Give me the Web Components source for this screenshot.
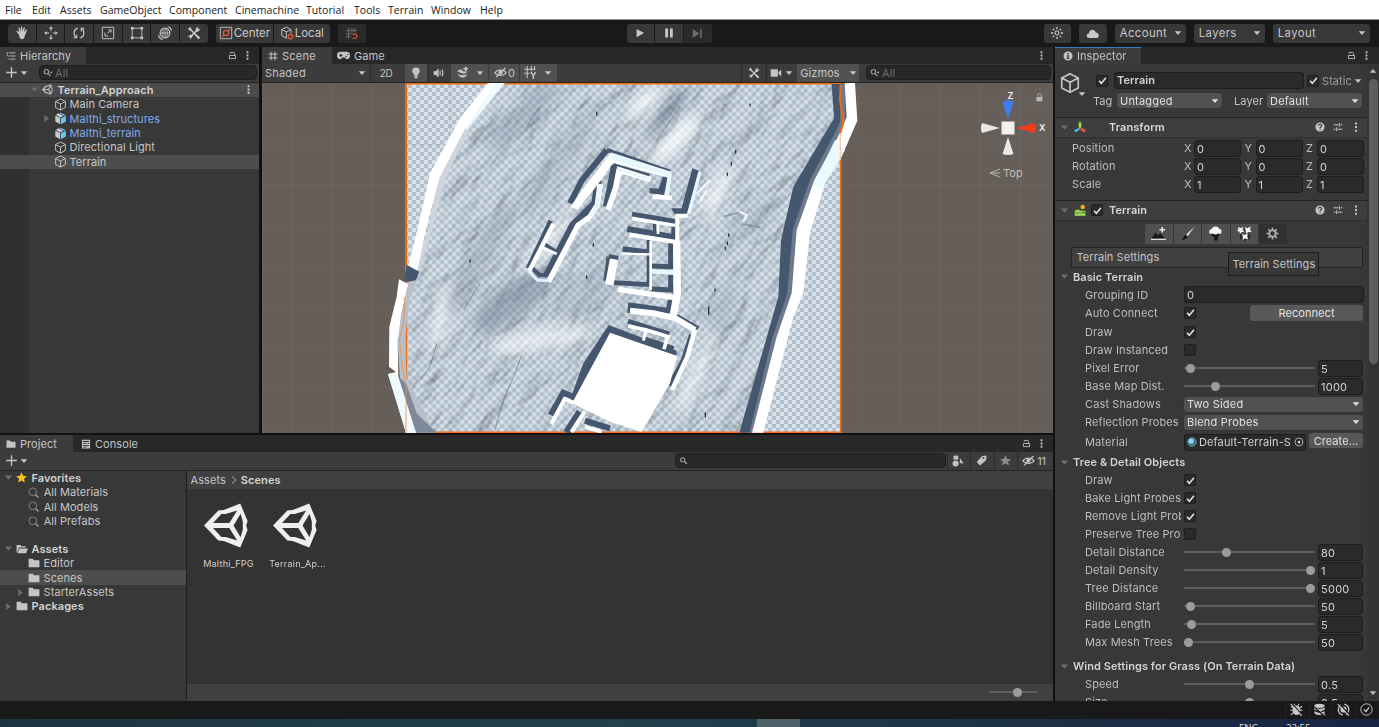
<!DOCTYPE html>
<html lang="en">
<head>
<meta charset="utf-8">
<title>Terrain_Approach</title>
<style>
html,body{margin:0;padding:0;background:#191919;overflow:hidden}
body{font-family:Inter,"Liberation Sans",sans-serif;font-size:11px;color:#c4c4c4;letter-spacing:.07px;line-height:14px}
</style>
</head>
<body>
<ue-editor></ue-editor>
<script>
const define = (name, css, html) => customElements.define(name, class extends HTMLElement {
  connectedCallback() {
    if (this.shadowRoot) return;
    const t = document.createElement('template');
    t.innerHTML = '<style>*{box-sizing:border-box}' + css + '</style>' + (typeof html === 'function' ? html(this) : html);
    this.attachShadow({ mode: 'open' }).append(t.content.cloneNode(true));
  }
});
const attr = (el, n, d = '') => el.getAttribute(n) ?? d;

/* Icons, drawn on a 16 x 16 grid in the current colour. */
const S = (d, w = 1.2) => `<path d="${d}" fill="none" stroke="currentColor" stroke-width="${w}"/>`;
const F = (d, c = 'currentColor') => `<path d="${d}" fill="${c}"/>`;
const cube = S('M8 1.2 14 4.3V11.7L8 14.8 2 11.7V4.3ZM2 4.3 8 7.5 14 4.3M8 7.5V14.8', 1.2);
const eye = S('M1 8.5C4 4 12 4 15 8.5 12 12.5 4 12.5 1 8.5Z', 1.4) + '<circle cx="8" cy="8" r="2.6" fill="currentColor"/>' + S('M2.5 14 14 2.5', 1.5);
const ICONS = {
  hand: F('M4.2 9.5 2 6.8C1.3 5.8 2.4 5 3.2 5.7L5 7.5 4 2.8C3.8 1.6 5.1 1.4 5.4 2.5L6.5 6.4 6.7 1.5C6.7.4 8.2.4 8.3 1.5L8.5 6.3 9.8 2.1C10.1 1 11.4 1.4 11.2 2.5L10.4 7 12.3 4.3C12.9 3.4 14.1 4 13.6 5L11.4 10.5C11 13.5 10 15 8 15 6 15 5.2 13.5 4.2 9.5Z'),
  move: S('M8 1.5V6M8 10V14.5M1.5 8H6M10 8H14.5', 1.1) + F('M8 .2 10.3 3H5.7ZM8 15.8 5.7 13H10.3ZM.2 8 3 5.7V10.3ZM15.8 8 13 10.3V5.7Z'),
  rotate: S('M6.5 2.4C1.5 4 1 10 5 13.4M9.5 13.6C14.5 12 15 6 11 2.6', 1.3) + S('M1.8 13.4H5.5V9.8M14.2 2.6H10.5V6.2', 1.2),
  scale: S('M1.5 1.5H14.5V14.5H1.5ZM8.5 4.5H11.5V7.5M11.5 4.5 7.5 8.5M4.5 7.5V11.5H8.5', 1.1),
  rect: S('M3 2.5H13M3 13.5H13M2.5 3V13M13.5 3V13', 1) + F('M1 1H4V4H1ZM12 1H15V4H12ZM1 12H4V15H1ZM12 12H15V15H12Z'),
  multi: '<circle cx="8" cy="8" r="5.600" fill="none" stroke="currentColor" stroke-width="1.3"/>' + S('M8 2.500V13.500M2.500 8H13.500M6 3.500Q4.5 8 6 12.500M10 3.500Q11.5 8 10 12.500', 1) + S('M11 .8Q15 1.5 15.4 5.5M.6 10.5Q1.3 14.8 5.4 15.3', 1.3),
  tools: S('M3.4 12.9 12.8 3.6', 1.9) + S('M4 4 12 12', 1.6) + F('M.8 3.8 3.8 .8 6 5.5 5.2 6ZM10.3 9.3 15.2 13.2 13 15.400 9.2 10.5ZM9.6 3.2 13 .6 12.4 3.4 15.4 3.2 12.8 6.500 10.3 6ZM.8 12.300 4 9.600 6.300 12 3.6 15.3 3.600 12.600Z'),
  pivot: S('M1.5 1.5H14.5V14.5H1.5Z', 1) + '<circle cx="8" cy="8" r="3" fill="none" stroke="#d8593b" stroke-width="1.6"/><path d="M10 6 12.8 3.2M6 10 3.5 12.5" stroke="#d8593b" stroke-width="1.4"/>',
  local: S('M12.5 8V4L7.2 1.3 2 4V11L7.2 14M2 4 7.2 6.7 12.5 4M7.2 6.7V14', 1.1) + '<circle cx="12" cy="12" r="2.6" fill="none" stroke="#d8593b" stroke-width="1.5"/>',
  snap: S('M4.5 1V14M8.5 1V7M12 1V7M1 4.5H15M1 8.5H8M1 12H7', 1.1) + '<path d="M9 9H12.5Q14.5 9 14.5 11.5T12.5 14H9" fill="none" stroke="#c24d35" stroke-width="1.8"/>',
  play: F('M3.5 2.5 13.5 8 3.5 13.5Z'),
  pause: F('M3 2H6.7V14H3ZM9.3 2H13V14H9.3Z'),
  step: F('M2 2.5 10.5 8 2 13.5ZM11.2 2.5H13.2V13.5H11.2Z'),
  sun: '<circle cx="8" cy="8" r="2.6" fill="none" stroke="currentColor" stroke-width="1.4"/>' + F('M7.1 0H8.9V3H7.1ZM7.1 13H8.9V16H7.1ZM0 7.1H3V8.9H0ZM13 7.1H16V8.9H13ZM2 3.2 3.2 2 4.9 3.7 3.7 4.9ZM12.8 2 14 3.2 12.3 4.9 11.1 3.7ZM2 12.8 3.7 11.1 4.9 12.3 3.2 14ZM12.3 11.1 14 12.8 12.8 14 11.1 12.3Z'),
  cloud: F('M4 13.5C-.5 13.5 0 8.3 3.5 8 3.7 2.5 10.7 1.5 12 6.8 17 7 16.8 13.5 13 13.5Z'),
  down: F('M1.5 4.500H14.500L8 12Z'),
  right: F('M4 1.500 12 8 4 14.500Z'),
  hier: S('M1 3H3.5M5 3H15M4 8H6M7 8H15M4 13H6M7 13H15', 1.5) + S('M2 3V8H4', 1),
  lock: S('M2.5 8H13.5V13.5H2.5Z', 1.6) + S('M4 4.500V2.500H9.500Q11.500 2.500 11.500 4.500V8', 1.6),
  lockf: F('M2.5 7H13.5V15H2.5Z') + S('M5 5V3Q5 1.6 6.5 1.6H9.5Q11.5 1.6 11.5 4V7.5', 1.6),
  dots: F('M6.4 .6H9.6V3.8H6.4ZM6.4 6.4H9.6V9.6H6.4ZM6.4 12.2H9.6V15.4H6.4Z'),
  plus: S('M8 1.5V14.5M1.5 8H14.5', 1.7),
  find: '<circle cx="5.5" cy="6" r="3.5" fill="none" stroke="currentColor" stroke-width="1.7"/>' + S('M8 8.5 12 13', 2) + F('M10.5 6H15.5L13 9Z'),
  find2: '<circle cx="6" cy="6" r="3.300" fill="none" stroke="currentColor" stroke-width="1.7"/>' + S('M8.5 8.5 12.5 12.8', 2.2),
  glass: '<circle cx="7" cy="7" r="5.6" fill="none" stroke="currentColor" stroke-width="1.1"/>' + S('M10.8 10.8 15.2 15.2', 1.9),
  unity: '<path fill="currentColor" fill-rule="evenodd" d="M0 8 5.1 2.700 7 2.500 12.9.2 15.5 6.4 15 8 15.5 9.6 12.9 15.8 7 13.500 5.1 13.3ZM3.2 7.1H9L11.8 2.700 7.700 3.900 6.200 3.900ZM3.2 8.9 6.200 12.1 7.700 12.100 11.8 13.3 9 8.9ZM10.5 8 13 12.2 13.8 9.4V6.6L13 3.8Z"/>',
  cube,
  prefab: F('M1.6 4.2 7.6 7.5V15L1.6 11.8Z', '#c3c9cd') + F('M8.6 7.6 14.6 4.6V11.8L8.600 15Z', '#62cbfb') + F('M2.2 3.5 5.7 1.6 11.4 4.8 8 6.8Z', '#c9cfd3') + F('M6.8 1.3 8 .8 14.200 3.7 12.3 4.7Z', '#7fd6ff'),
  grid: S('M5 1V15M11 1V15M1 5H15M1 11H15', 1.6),
  pad: '<path fill="currentColor" fill-rule="evenodd" d="M4 3.5H12Q16 4 16 8T12.5 12.5Q10.5 12.5 9.5 10.5H6.5Q5.5 12.5 3.5 12.5 0 12 0 8T4 3.5ZM4 6V7H3V8.6H4V9.8H5.4V8.6H6.6V7H5.4V6ZM10.5 8.5H12V10H10.5ZM12.5 6H14V7.5H12.5Z"/>',
  bulb: F('M8 .8C1.8.8 2 6.5 5 9.2L5.6 11.5H10.4L11 9.2C14 6.5 14.2.8 8 .8ZM5.8 12.3H10.2V14Q8 16.5 5.8 14Z'),
  audio: F('M.8 5.5H3.5L7.5 2V14L3.5 10.5H.8Z') + S('M9.5 5V11M12 3.5Q14.5 8 12 12.5', 1.5),
  fx: F('M1 6 6 4 9 6.5 14.5 7 10 9.5 6.5 9ZM1 9.5 6 11.5 14.5 10.5 10 14 6 14Z') + F('M11 .8H13V6H11ZM9.2 2.5H14.8V4.4H9.2Z'),
  eye,
  gridy: S('M4 0V15M9 0V6M0 4H14M0 9H7M13 0V5', 1.3) + S('M8.5 7.5 11.5 11.5 14.5 7.5M11.5 11.5V16', 1.9),
  cam: F('M1 3H10.5V13H1ZM11.3 7 15 3.5V12.5L11.3 9Z'),
  info: '<path fill="currentColor" fill-rule="evenodd" d="M8 .8A7.2 7.2 0 1 0 8 15.2 7.2 7.2 0 0 0 8 .8ZM6.8 3.2H9.2V5.4H6.8ZM6 6.6H9.3V11.4H10.4V12.8H5.8V11.4H6.8V8H6Z"/>',
  help: '<circle cx="8" cy="8" r="7.3" fill="currentColor"/><path d="M5.3 6Q5.4 3.6 8 3.6T10.6 6Q10.6 7.4 8.3 8.4V10M8.3 11V12.8" fill="none" stroke="#3b3b3b" stroke-width="1.8"/>',
  preset: S('M1 4.5H8.5M12 4.5H15M10.2 1.5V7.5M1 11.5H4M7.5 11.5H15M5.8 8.5V14.5', 1.6),
  check: S('M3 8.5 6.3 12 13 4', 2.2),
  gizmo: F('M6.2 2.5 8 .5 9.8 2.5V9H6.2Z', '#9ee03c') + F('M6.8 9 8 11 3.2 14.8.6 14.4.8 12Z', '#5ab9ea') + F('M9.5 8.6 15.4 12 15.2 14.4 12.6 14.6 8.2 11.2Z', '#ee5b36'),
  terrain: '<circle cx="11.6" cy="4" r="3" fill="#f7a823"/>' + F('M.8 9Q5 6 8.5 8.3T15.2 8.6V11.4L.8 12Z', '#8fd43c') + F('M.8 12.8 15.2 12.2V15.5H.8Z', '#a6e65a') + S('M5 15 12 8', .8),
  raise: F('M0 13.8 5 7.2 7.5 10 10 7.8 15.5 13.8Z', '#161616') + S('M0 14.2H16', 1.4) + S('M12 1V7M9 4H15', 1.7),
  brush: F('M15.6.6 8.2 10.7 6.6 9.2Z', '#eee') + F('M6 9.6 8 11.4Q7 14.6 1 15 4.4 13.4 4 11.2Z', '#111'),
  tree: '<circle cx="8" cy="4.7" r="4.2" fill="#f4f4f4"/><circle cx="4.2" cy="6" r="2.800" fill="#f4f4f4"/><circle cx="11.6" cy="5.800" r="2.800" fill="#f4f4f4"/>' + F('M3 8 6 8.500 8 10 12 7.500 11.500 10 10.200 11.5V15.5H6.8V11.5L4 10.500Z', '#111'),
  flower: F('M1 1 4 2.200 6.5 1 6 4 7.500 6.5 5 6.5 3.2 8.3 2.6 6.2 0 5 1.500 3.500ZM8.6 1 11.2 2.500 14.6 .5 13.9 4 15.5 6.5 12 6.500 9.8 8 9.500 5ZM5.4 8.500 8 9.5 11.5 8 10.8 11 11.8 14 8.5 13 6 14.6 6.4 11.5Z', '#f4f4f4') + F('M3.5 9H5V14H3.5ZM12.2 8.5H13.6V14H12.2ZM8 14H9.3V16H8Z', '#151515'),
  gear: '<circle cx="8" cy="8" r="4" fill="none" stroke="currentColor" stroke-width="2.600"/>' + F('M7 .5H9V4H7ZM7 12H9V15.5H7ZM.5 7H4V9H.5ZM12 7H15.5V9H12ZM2 3.4 3.4 2 5.8 4.4 4.4 5.8ZM12.6 2 14 3.4 11.6 5.8 10.2 4.4ZM2 12.6 4.4 10.2 5.8 11.6 3.4 14ZM11.6 10.2 14 12.6 12.6 14 10.2 11.6Z'),
  ball: '<circle cx="8" cy="8" r="7" fill="#2d5f78"/><circle cx="8" cy="8" r="6.6" fill="none" stroke="#9fd9ef" stroke-width="1"/><circle cx="6.8" cy="6.6" r="4.2" fill="#8bd6f7"/>',
  target: '<circle cx="8" cy="8" r="6.4" fill="none" stroke="currentColor" stroke-width="1.2"/><circle cx="8" cy="8" r="2.2" fill="currentColor"/>',
  folder: F('M.8 2.2H6.3L8 4.2H15.2V13.8H.8Z'),
  open: F('M.8 13V2.5H5.8L7.3 4.2H13V6H4L1.6 13Z') + F('M4.4 7.2H16L13.4 13.8H2.2Z'),
  console: '<path fill="currentColor" fill-rule="evenodd" d="M1.5 1H14.5V15H1.5ZM3 3.2V4.6H13V3.2ZM3 6.6V8H9V6.6ZM3 10V11.4H13V10ZM10.5 6.6V8H13V6.6ZM3 13V14H9V13Z"/>',
  star: F('M8 .4 10.3 5.4 15.8 6 11.7 9.7 12.9 15.2 8 12.4 3.1 15.2 4.3 9.7.2 6 5.7 5.4Z'),
  types: F('M2 .8H8.4V6.2H2Z') + '<circle cx="4.8" cy="11.2" r="4" fill="currentColor"/>' + F('M10.4 4 15.6 11H10.4Z'),
  tag: '<path fill="currentColor" fill-rule="evenodd" d="M8.6 1.8 14 .8 15.4 2.2 14.6 7.6 6 15.2 1 10ZM11.4 3.2A1.3 1.3 0 1 0 11.5 5.6 1.3 1.3 0 0 0 11.4 3.2Z"/>',
  bug: '<ellipse cx="8" cy="9" rx="4.800" ry="5.8" fill="currentColor"/>' + S('M1 4 4.5 6.5M15 4 11.5 6.5M.5 9H15.5M1 14.5 4.5 11.5M15 14.5 11.5 11.5M5 1 6.5 4M11 1 9.5 4', 1.3) + '<path d="M3 1 15.5 15" stroke="#191919" stroke-width="1.500"/><path d="M1 1 14.5 16" stroke="currentColor" stroke-width="1.3"/>',
  layers: '<ellipse cx="8" cy="3.4" rx="6.3" ry="2.6" fill="currentColor"/>' + F('M1.7 5.6Q8 9 14.3 5.6V8.4Q8 11.8 1.7 8.4ZM1.7 10.3Q8 13.7 14.3 10.3V13Q8 16.8 1.7 13Z') + '<path d="M3 6 14 16" stroke="#191919" stroke-width="2"/><path d="M4 5 15.5 15.8" stroke="currentColor" stroke-width="1.2"/>',
  refresh: S('M5 2Q.8 5 1.8 9.5T7 14.6M9 1.4Q14.6 3 14.4 8T11 14', 1.6) + '<circle cx="8" cy="8" r="3.8" fill="currentColor"/><path d="M3 1 15.5 14.5" stroke="#191919" stroke-width="1.500"/><path d="M1 1.5 14.5 15.5" stroke="currentColor" stroke-width="1.3"/>',
  done: '<circle cx="8" cy="8" r="7" fill="none" stroke="currentColor" stroke-width="1.2"/>' + S('M4.8 8 7.3 10.5 11.4 5.4', 1.6)
};
define('ue-icon', ':host{display:block;flex:none;width:var(--s,12px);height:var(--s,12px)}svg{display:block;width:100%;height:100%}',
  el => { el.style.setProperty('--s', attr(el, 'size', '12') + 'px'); return `<svg viewBox="0 0 16 16">${ICONS[attr(el, 'name')]}</svg>`; });

const icon = (n, s = 12, style = '') => `<ue-icon name="${n}" size="${s}" style="${style}"></ue-icon>`;
const px = n => `margin-left:${n}px`;

/* Controls */
define('ue-button', ':host{display:flex;align-items:center;justify-content:center;flex:none;background:#383838;height:19px}:host([lit]){background:#505050}:host([dim]){background:#2a2a2a}', '<slot></slot>');
define('ue-check', ':host{display:flex;align-items:center;justify-content:center;flex:none;width:12px;height:12px;border:1px solid #1d1d1d;border-radius:2px;background:#2a2a2a;color:#e4e4e4}',
  el => el.hasAttribute('on') ? icon('check', 11) : '');
define('ue-field', ':host{display:block;flex:none;height:17px;border:1px solid #1d1d1d;border-radius:3px;background:#2a2a2a;color:#d2d2d2;padding:1px 2px 0;line-height:14px;white-space:nowrap;overflow:hidden}', '<slot></slot>');
define('ue-select', ':host{display:flex;align-items:center;justify-content:space-between;flex:none;height:15px;border-radius:3px;background:#515151;color:#e0e0e0;padding:0 3px 0 3px;line-height:14px;letter-spacing:.2px;box-shadow:0 0 0 .5px #303030}', `<slot></slot>${icon('down', 8)}`);
define('ue-slider', ':host{display:flex;align-items:center;flex:none;width:131px;height:8px;background:linear-gradient(#5e5e5e,#5e5e5e) 0 50%/100% 2px no-repeat}i{display:block;width:9px;height:9px;border-radius:50%;background:#9b9b9b}',
  el => `<i style="${px(attr(el, 'at'))}"></i>`);
define('ue-search', ':host{display:flex;align-items:center;flex:none;height:15px;border:1px solid #1f1f1f;border-radius:4px;background:#282828;color:#a0a0a0;padding-left:3px}span{color:#6f6f6f;margin-left:2px}',
  el => `${icon(attr(el, 'icon', 'find'), 10)}<span><slot></slot></span>`);
define('ue-tab', ':host{display:flex;align-items:center;flex:none;height:17px;color:#c4c4c4;padding-top:1px}:host([on]){background:#3c3c3c}ue-icon{margin-right:4px}',
  el => `${icon(attr(el, 'icon'), attr(el, 'size', 10), px(6))}<slot></slot>`);
define('ue-tree-row', ':host{display:flex;align-items:center;height:14.38px;white-space:nowrap;color:#c6c6c6}:host([bold]){font-weight:600;color:#d2d2d2}:host([link]){color:#7fabef}:host([sel]){background:#4d4d4d}.a{color:#6c6c6c}.t{margin-left:2.500px}.i{color:var(--i,#c4c4c4)}',
  el => { const f = attr(el, 'fold'), x = +attr(el, 'x');
    return `<div style="width:${x - 12}px"></div><div class="a" style="width:12px">${f ? icon(f, 9) : ''}</div><div class="i">${icon(attr(el, 'icon'), attr(el, 'size', 13))}</div><div class="t"><slot></slot></div>`; });

define('ue-menubar', ':host{display:grid;grid-template-columns:27px 28px 40px 69px 66px 71px 48px 34px 43px 49px 60px;height:20px;background:#fff;border-bottom:1px solid #8f9795;padding-left:5px;align-items:center;color:#1a1a1a;font:10.5px "Open Sans",sans-serif;letter-spacing:.05px;padding-top:2px}',
  ['File','Edit','Assets','GameObject','Component','Cinemachine','Tutorial','Tools','Terrain','Window','Help'].map(t => `<span>${t}</span>`).join(''));

define('ue-toolbar', ':host{display:flex;align-items:center;height:27px;background:#191919;color:#c8c8c8}ue-button:first-child{border-radius:3px 0 0 3px}ue-button:last-child{border-radius:0 3px 3px 0}div{display:flex;gap:1px;flex:none}.d{justify-content:space-between;padding:0 4px 0 5px;letter-spacing:.4px;font-size:11.3px}.c{font-size:11.5px;letter-spacing:-.05px}', `
  <div style="margin-left:8px">${['hand','move','rotate','scale','rect','multi','tools'].map(n => `<ue-button style="width:27.7px">${icon(n, 14)}</ue-button>`).join('')}</div>
  <div class="c" style="margin-left:8px"><ue-button style="width:57px">${icon('pivot', 14)}<span style="margin-left:1px">Center</span></ue-button><ue-button style="width:56px">${icon('local', 14)}<span style="margin-left:1px">Local</span></ue-button></div>
  <div style="margin-left:8px"><ue-button dim style="width:28px;color:#777;border-radius:3px">${icon('snap', 13)}</ue-button></div>
  <div style="margin-left:261px"><ue-button style="width:27px">${icon('play', 12)}</ue-button><ue-button style="width:28px">${icon('pause', 12)}</ue-button><ue-button dim style="width:28px;color:#6c6c6c">${icon('step', 13)}</ue-button></div>
  <div style="margin-left:332px"><ue-button style="width:27px;border-radius:3px">${icon('sun', 12)}</ue-button></div>
  <div style="margin-left:8px"><ue-button style="width:28px;border-radius:3px">${icon('cloud', 13)}</ue-button></div>
  ${[['Account', 71], ['Layers', 71], ['Layout', 97]].map(([t, w]) => `<ue-button class="d" style="width:${w}px;margin-left:8px;border-radius:3px">${t}${icon('down', 8)}</ue-button>`).join('')}`);

/* Panels */
define('ue-hierarchy', `:host{display:flex;flex-direction:column;background:#383838;overflow:hidden;height:386px;width:259px}
  .tabs{display:flex;background:#282828;height:17px;align-items:center}.bar{display:flex;height:19px;background:#3c3c3c;align-items:center;border-bottom:1px solid #232323}
  .tree{flex:1;background:linear-gradient(90deg,#303030 29px,#383838 29px)}`, `
  <div class="tabs"><ue-tab on icon="hier" style="width:86px">Hierarchy</ue-tab>${icon('lock', 9, px(142))}${icon('dots', 9, px(6))}</div>
  <div class="bar">${icon('plus', 13, px(5))}${icon('down', 8, px(2))}<ue-search style="width:218px;margin-left:11px">All</ue-search></div>
  <div class="tree">
    <ue-tree-row bold sel fold="down" x="42" icon="unity" size="11" style="background:#4b4b4b"><div style="display:flex;width:197px;justify-content:space-between;padding-left:2px;align-items:center">Terrain_Approach${icon('dots', 9)}</div></ue-tree-row>
    <ue-tree-row x="54" icon="cube">Main Camera</ue-tree-row>
    <ue-tree-row link fold="right" x="54" icon="prefab">Malthi_structures</ue-tree-row>
    <ue-tree-row link x="54" icon="prefab">Malthi_terrain</ue-tree-row>
    <ue-tree-row x="54" icon="cube">Directional Light</ue-tree-row>
    <ue-tree-row sel x="54" icon="cube">Terrain</ue-tree-row>
  </div>`);

/* Top-down view of the excavated site: relief, circuit wall and building plan. */
const N = '#45566f';
const wall = (pts, w, c = '#fff') => `<polyline points="${pts}" fill="none" stroke="${c}" stroke-width="${w}"/>`;
const poly = (pts, c) => `<polygon points="${pts}" fill="${c}"/>`;
const hill = '375,10 270,140 190,300 150,460 110,570 85,650 70,770 75,900 160,1058 1090,1058 1200,640 1215,470 1250,330 1310,210 1365,110 1355,10';
const blob = (x, y, rx, ry, a, c, o) => `<ellipse cx="${x}" cy="${y}" rx="${rx}" ry="${ry}" transform="rotate(${a} ${x} ${y})" fill="${c}" opacity="${o}"/>`;
define('ue-viewport', ':host{display:block;flex:none;width:791px;height:350px;background:#665f59}svg{display:block}text{font:600 9px Inter,sans-serif;fill:#f0f0f0}', `
<svg width="791" height="350" viewBox="0 0 791 350">
  <defs>
    <pattern id="ck" width="24" height="24" patternUnits="userSpaceOnUse"><rect width="24" height="24" fill="#d8e2ea"/><path d="M0 0H12V12H0ZM12 12H24V24H12Z" fill="#b3bfca"/></pattern>
    <pattern id="gl" width="121.5" height="121.5" patternUnits="userSpaceOnUse" x="98" y="70"><path d="M0 0H121.5M0 0V121.5" stroke="#77726b" stroke-width="2" fill="none"/></pattern>
    <filter id="relief" x="0" y="0" width="100%" height="100%" color-interpolation-filters="sRGB"><feTurbulence type="fractalNoise" baseFrequency=".018 .009" numOctaves="5" seed="8" result="n"/><feDiffuseLighting in="n" surfaceScale="6.500" diffuseConstant="1.27" lighting-color="#f8fbff"><feDistantLight azimuth="200" elevation="52"/></feDiffuseLighting></filter>
    <filter id="soft"><feGaussianBlur stdDeviation="18"/></filter>
    <clipPath id="hc"><polygon points="${hill}"/></clipPath>
  </defs>
  <g transform="translate(118,-3) scale(.33333)">
    <rect x="-360" y="9" width="2380" height="1060" fill="url(#gl)"/>
    <rect x="77" y="10" width="1305" height="1048" fill="url(#ck)"/>
    <path d="M210 10V1058M1290 10V1058M77 194H1382" stroke="#8d98a3" stroke-width="1.5" opacity=".6"/>
    <g clip-path="url(#hc)">
      <rect x="60" y="8" width="1330" height="1052" fill="url(#ck)"/>
      <g transform="rotate(34 700 530)" style="mix-blend-mode:multiply" opacity=".8"><rect x="-300" y="-400" width="2000" height="1900" filter="url(#relief)"/></g>
      <g filter="url(#soft)">
        ${blob(400, 660, 150, 50, -35, '#66758a', .45)}${blob(430, 110, 150, 35, -45, '#66758a', .3)}${blob(300, 530, 200, 36, -60, '#66758a', .25)}${blob(540, 240, 200, 40, -55, '#7a889b', .2)}
        ${blob(860, 100, 100, 16, -52, '#45566f', .5)}${blob(620, 640, 120, 60, -30, '#7a889b', .2)}${blob(1030, 690, 90, 30, -70, '#66758a', .2)}${blob(1120, 420, 80, 30, -40, '#66758a', .2)}
        ${blob(885, 180, 100, 22, -45, '#fff', .9)}${blob(790, 70, 70, 18, -50, '#fff', .9)}${blob(480, 780, 150, 30, -10, '#fff', .55)}${blob(1010, 340, 90, 22, -65, '#fff', .7)}${blob(180, 720, 100, 20, -80, '#fff', .6)}${blob(950, 880, 130, 22, -65, '#fff', .6)}${blob(510, 480, 120, 22, -50, '#fff', .5)}
      </g>
      <path d="M425 825 405 880 370 960 345 1050M280 190 370 80M440 140 480 80M250 690 300 610M830 180 900 80M480 700 510 670M170 790 150 860 120 900" fill="none" stroke="#59687d" stroke-width="3" opacity=".6"/>
      <path d="M1067 210V220M1054 246V256M1042 278V288M1046 460V470M1042 485V495M1036 500V508M640 490V500M620 586V596M1005 625V634M986 680V705M270 538V548M976 998V1012M650 96V106M1110 70V78" stroke="#222b38" stroke-width="4"/>
      <path d="M1030 410 1075 398M1085 432 1140 442" stroke="#5c6b80" stroke-width="5" opacity=".5"/><path d="M950 340 990 300M960 365 980 330M1080 395 1100 405 1090 425" fill="none" stroke="#f8fbfd" stroke-width="6"/>
    </g>
    <path d="M79 10V1058M76 11H1384M136 1057H1382M1382 10V1058" fill="none" stroke="#f36c10" stroke-width="5"/>
    ${poly('375,8 270,145 195,300 155,450 118,578 100,560 145,455 172,300 250,140 340,8', '#cfd5dd')}
    ${poly('375,8 262,148 248,140 325,8', '#effaff')}
    ${poly('325,8 240,115 150,280 110,460 85,555 112,572 140,440 178,295 258,140 350,8', '#fff')}
    ${poly('80,555 118,575 103,612 72,602', N)}
    ${poly('85,605 112,600 88,660 75,780 80,900 165,1058 100,1058 60,900 52,770', '#b7bfca')}
    ${poly('56,890 78,910 110,1000 170,1058 100,1058 75,980', '#7d899a')}
    ${poly('57,598 84,612 65,700 53,780 55,890 108,1058 78,1058 24,882 48,876 27,860 28,740 50,650', '#fff')}
    ${poly('24,882 48,878 90,1010 108,1058 78,1058 60,1000', '#effaff')}
    <path d="M72 650Q78 690 68 740L58 780 65 840 70 880 78 920M78 920V1058" fill="none" stroke="#f08a45" stroke-width="3" opacity=".8"/>
    ${poly('1355,12 1384,12 1384,120 1310,290 1262,440 1240,640 1190,800 1115,1058 1078,1058 1195,650 1203,480 1240,320 1305,210 1362,115', N)}
    ${poly('1384,12 1398,12 1395,125 1325,285 1275,450 1250,640 1200,800 1135,1058 1108,1058 1175,780 1222,640 1238,450 1290,300 1380,130', '#6d7a8d')}
    ${poly('1394,8 1425,8 1432,122 1385,230 1335,310 1290,460 1270,640 1240,710 1150,1058 1116,1058 1190,770 1235,640 1250,450 1303,300 1385,150 1400,110', '#fff')}
    ${poly('1365,180 1395,210 1370,255 1325,325 1298,320 1315,285', '#eafaff')}
    <path d="M1382 14 1380 60 1390 125 1381 160" fill="none" stroke="#f36c10" stroke-width="6"/><path d="M1381 160V240" stroke="#f7c9a5" stroke-width="4"/>

    ${wall('680,210 605,302 570,370', 18, N)}${wall('680,210 870,275', 12, N)}
    ${wall('700,257 808,288', 14, N)}${wall('702,255 692,310 678,380', 18, N)}
    ${wall('654,302 645,370 614,400 578,436 498,590', 22, N)}
    ${wall('512,422 444,565', 14, N)}${wall('490,490 532,518', 12, N)}${wall('455,562 478,585 500,585', 12, N)}
    ${poly('848,290 864,290 852,345 808,340 810,324 836,326', N)}
    ${poly('937,265 957,272 920,405 885,405 873,385 905,385', N)}
    ${wall('756,402 885,424', 14, N)}${wall('742,447 885,472', 18, N)}${wall('824,430 824,460', 10, N)}${wall('880,430 880,480', 12, N)}
    ${wall('728,507 810,517', 16, N)}${wall('805,480 805,610', 10, N)}
    ${wall('872,485 872,560 815,558', 15, N)}${wall('686,530 715,534', 14, N)}${wall('686,530 676,602', 12, N)}
    ${wall('700,608 808,614', 14, N)}${wall('872,585 872,630 812,626', 15, N)}
    ${wall('750,700 752,676 865,692 872,660', 16, N)}
    ${wall('744,724 868,762', 14, N)}${wall('790,778 880,808', 20, N)}${wall('890,708 955,745', 12, N)}
    ${wall('936,765 912,840 870,918', 18, N)}
    ${poly('686,735 890,812 888,835 700,770 585,975 568,965 610,850', N)}
    ${wall('575,948 550,938 512,1005', 18, N)}${wall('600,995 560,1058', 22, N)}${wall('615,1022 690,1045', 18, N)}

    ${poly('692,220 875,276 868,294 700,248 650,318 594,388 570,382 625,305', '#fff')}${poly('692,217 875,276 869,291 698,240', '#e6f7fd')}
    ${wall('812,299 718,270 708,320 684,390', 17)}${wall('812,299 712,268', 9, '#e6f7fd')}
    ${wall('870,280 860,348', 12, '#e6f7fd')}${wall('818,350 876,354', 14)}
    ${wall('660,312 652,375 630,410 594,436 505,606', 16)}${wall('660,312 652,380 632,408', 11, '#eaf8fd')}${wall('520,432 448,572', 13)}${wall('488,503 530,522', 9)}${wall('445,572 472,600 500,602', 9, '#e2f4fb')}
    ${wall('960,275 926,402', 10, '#e6f7fd')}${wall('924,407 892,407 892,490', 12)}
    ${wall('757,416 885,436', 10)}${wall('748,464 900,488', 13)}${wall('834,430 834,462', 8)}
    ${wall('728,521 810,523', 7)}${wall('812,482 812,630', 8)}${wall('815,575 885,577', 13, '#e6f7fd')}
    ${wall('890,485 892,640 880,705', 22)}${wall('702,538 688,614', 25)}${wall('714,628 880,652', 16)}
    ${wall('750,692 820,700 885,714 945,750', 18)}${wall('945,750 922,830 876,930', 14)}
    ${wall('745,738 800,750 870,772', 11)}${wall('798,752 790,782', 9)}${wall('862,772 852,808', 11)}
    ${poly('690,758 892,828 870,910 785,1056 690,1025 576,970', '#fff')}
    ${wall('580,968 554,957 514,1032', 12)}${wall('614,995 574,1056', 12)}${wall('615,1040 665,1056', 11)}
  </g>
  <g transform="translate(746,45)">
    <path d="M0 -9 -5.5 -26Q0 -30 5.5 -26Z" fill="#3d7cf0"/><path d="M8 0 27 -5Q28.500 0 27 5Z" fill="#f23c1c"/><path d="M-8 0-26-5Q-28 0-26 5Z" fill="#e8e8e8"/><path d="M0 9-5.500 26Q0 28 5.500 26Z" fill="#e8e8e8"/><rect x="-6.500" y="-6.500" width="13" height="13" fill="#f4f1ed"/>
    <text x="-0.500" y="-29">Z</text><text x="31" y="3">X</text>
    <path d="M-8 41-18 45-8 49M-8 45H-18" fill="none" stroke="#bbb5b0"/><text x="-5" y="49" style="font:400 11px Inter,sans-serif;fill:#c3beba;letter-spacing:.1px">Top</text>
    <g transform="translate(27,-35) scale(.55)" color="#b9b5b1">${ICONS.lockf}</g>
  </g>
</svg>`);

define('ue-scene', `:host{display:flex;flex-direction:column;background:#383838;width:791px;height:386px}
  .tabs{display:flex;background:#282828;height:17px;align-items:center}.bar{display:flex;height:19px;background:#3c3c3c;align-items:center;border-bottom:1px solid #232323}.bar>ue-button{height:18px;background:none;margin-right:1px;border-left:1px solid #2b2b2b}.bar>ue-button[lit]{background:#505050;border-color:#505050}`, `
  <div class="tabs"><ue-tab on icon="grid" style="width:70px;letter-spacing:.25px">Scene</ue-tab><ue-tab icon="pad" size="13" style="width:70px;margin-left:-1px">Game</ue-tab>${icon('dots', 9, px(636))}</div>
  <div class="bar"><div style="display:flex;width:108px;padding:0 4px 0 3px;justify-content:space-between;align-items:center"><span style="letter-spacing:.2px">Shaded</span>${icon('down', 8)}</div>
    <ue-button style="width:5px"></ue-button><ue-button style="width:27px;font-size:10px;letter-spacing:-.4px;border:0;padding-right:7px">2D</ue-button>
    <ue-button lit style="width:22px;margin-left:1px;padding-right:2px">${icon('bulb', 12)}</ue-button><ue-button style="width:22px;padding-right:2px">${icon('audio', 12)}</ue-button>
    <ue-button lit style="width:37px">${icon('fx', 13)}${icon('down', 8, px(7))}</ue-button><ue-button lit style="width:30px">${icon('eye', 13)}<span style="margin-left:1px">0</span></ue-button>
    <ue-button lit style="width:37px;padding-right:2px">${icon('gridy', 13)}${icon('down', 8, px(7))}</ue-button>
    <ue-button style="width:24px;margin-left:183px">${icon('tools', 12)}</ue-button><ue-button style="width:30px">${icon('cam', 12)}${icon('down', 8, px(3))}</ue-button>
    <ue-button lit style="width:62px">Gizmos${icon('down', 8, px(9))}</ue-button><ue-search style="width:185px;margin-left:6px">All</ue-search></div>
  <ue-viewport></ue-viewport>`);

define('ue-asset', ':host{display:flex;flex-direction:column;align-items:center;width:69px;font-size:9px;line-height:12px;letter-spacing:.25px;color:#d2d2d2}ue-icon{color:#efefef;margin:0 4px 10px 0}', `${icon('unity', 45)}<slot></slot>`);
define('ue-project', `:host{display:flex;flex-direction:column;background:#383838;width:1053px;height:266px;margin-top:2px}
  .tabs{display:flex;background:#282828;height:17px;align-items:center}.bar{display:flex;height:19px;background:#3c3c3c;align-items:center;border-bottom:1px solid #232323}.bar>ue-button{height:18px;background:none;border-left:1px solid #2b2b2b}
  .main{display:flex;flex:1}.tree{width:187px;border-right:1px solid #202020}.files{flex:1;display:flex;flex-direction:column;background:#333}
  .crumb{display:flex;align-items:center;height:18px;background:#404040;padding-left:3.500px}.crumb b{font-weight:600;color:#d4d4d4}.grid{display:flex;flex:1;padding:14px 0 0 7px}.foot{display:flex;align-items:center;height:18px;background:#404040;border-top:1px solid #2d2d2d}`, `
  <div class="tabs"><ue-tab on icon="folder" style="width:73px">Project</ue-tab><ue-tab icon="console" style="width:80px;padding-left:2px">Console</ue-tab>${icon('lock', 9, px(869))}${icon('dots', 9, px(6))}</div>
  <div class="bar">${icon('plus', 13, px(5))}${icon('down', 8, px(2))}<ue-search icon="find2" style="width:271px;margin-left:647px"></ue-search>
    <ue-button style="width:23px;margin-left:1px;padding-right:2px">${icon('types', 12)}</ue-button><ue-button style="width:24px;padding-right:2px">${icon('tag', 11)}</ue-button><ue-button style="width:23px;color:#8a8a8a;padding-right:2px">${icon('star', 11)}</ue-button><ue-button style="width:35px;padding-right:2px">${icon('eye', 13)}<span style="margin-left:2px;letter-spacing:-.2px">11</span></ue-button></div>
  <div class="main"><div class="tree">
      <ue-tree-row bold fold="down" x="16" icon="star" size="11" style="--i:#f7c11a">&#8202;&#8202;Favorites</ue-tree-row>
      ${['All Materials','All Models','All Prefabs'].map(t => `<ue-tree-row x="28" icon="glass" size="11" style="--i:#9a9a9a">&#8202;&#8202;${t}</ue-tree-row>`).join('')}
      <div style="height:13.500px"></div>
      <ue-tree-row bold fold="down" x="16" icon="open" size="12">&#8202;Assets</ue-tree-row>
      <ue-tree-row x="28" icon="folder" size="12">&#8202;Editor</ue-tree-row><ue-tree-row sel x="28" icon="folder" size="12">&#8202;Scenes</ue-tree-row>
      <ue-tree-row fold="right" x="28" icon="folder" size="12">&#8202;StarterAssets</ue-tree-row><ue-tree-row bold fold="right" x="16" icon="folder" size="12">&#8202;Packages</ue-tree-row>
    </div><div class="files"><div class="crumb">Assets<svg width="6" height="8" viewBox="0 0 6 8" style="margin:0 4px 0 5px"><path d="M1 .5 5 4 1 7.500" fill="none" stroke="#aaa"/></svg><b>Scenes</b></div>
      <div class="grid"><ue-asset>Malthi_FPG</ue-asset><ue-asset>Terrain_Ap...</ue-asset></div>
      <div class="foot"><ue-slider at="24" style="width:49px;margin-left:802px"></ue-slider></div></div></div>`);

/* Inspector pieces */
define('ue-component', ':host{display:flex;align-items:center;height:21px;background:#3e3e3e;border-top:1px solid #232323;border-bottom:1px solid #303030;flex:none}.a{color:#6c6c6c;margin-left:5px}b{font-weight:600;color:#d6d6d6}.l{display:flex;align-items:center;width:35px;gap:5px;margin-left:5px}.r{display:flex;margin-left:auto;gap:8px;margin-right:6px}',
  el => `<div class="a">${icon('down', 9)}</div><div class="l">${icon(attr(el, 'icon'), 12)}${el.hasAttribute('check') ? '<ue-check on></ue-check>' : ''}</div><b><slot></slot></b><div class="r">${icon('help', 10)}${icon('preset', 10)}${icon('dots', 10)}</div>`);
define('ue-foldout', ':host{display:flex;align-items:center;height:18px;font-weight:600;color:#d2d2d2;flex:none;white-space:nowrap}div{color:#6c6c6c;margin:0 4px 0 5px}', `<div>${icon('down', 9)}</div><slot></slot>`);
define('ue-prop', ':host{display:flex;align-items:center;height:18px;flex:none;padding-left:30px}span{width:96px;margin-right:3px;overflow:hidden;white-space:nowrap;flex:none;color:#bdbdbd;letter-spacing:.12px}:host([outer]){padding-left:17px}:host([outer]) span{width:112px;margin:0}', el => `<span>${attr(el, 'label')}</span><slot></slot>`);

const vec = (l, v) => `<ue-prop outer label="${l}">${['X','Y','Z'].map((a, i) => `<div style="width:${i ? 11 : 10}px;color:#bdbdbd;flex:none">${a}</div><ue-field style="width:47px;margin-right:${i < 2 ? 3.5 : 0}px">${v}</ue-field>`).join('')}</ue-prop>`;
const chk = (l, on, extra = '') => `<ue-prop label="${l}"><ue-check ${on ? 'on' : ''}></ue-check>${extra}</ue-prop>`;
const sld = (l, at, v) => `<ue-prop label="${l}"><ue-slider at="${at}"></ue-slider><ue-field style="width:45px;margin-left:3px;letter-spacing:.25px">${v}</ue-field></ue-prop>`;

define('ue-inspector', `:host{display:flex;flex-direction:column;background:#383838;width:324px;height:654px;overflow:hidden}
  .tabs{display:flex;background:#282828;height:17px;align-items:center;flex:none}.wrap{display:flex;flex:1;min-height:0}.body{width:312px;display:flex;flex-direction:column;overflow:hidden}
  .head{display:flex;height:53px;flex:none}.obj{width:32px;padding:8px 0 0 4px}.obj ue-icon+ue-icon{margin:-4px 0 0 19px}.head>div+div{flex:1}.line{display:flex;align-items:center;height:20px}
  .scroll{width:12px;display:flex;flex-direction:column;align-items:center;background:#343434;color:#bdbdbd}.thumb{width:9px;height:285px;border-radius:5px;background:#5e5e5e;margin:4px 0 auto 1px}
  .tools{display:flex;gap:1px;margin:3px 0 0 90px;flex:none}.tools ue-button{width:27.500px;height:20px;color:#e8e8e8}.tip{position:absolute;left:1228px;top:252px;width:91px;height:24px;background:#383838;border:1.500px solid #1a1a1a;line-height:22px;padding-left:3.500px;white-space:nowrap}
  .box{height:21px;margin:3px 4px 0 16px;border:1px solid #232323;border-radius:2px;background:#404040;padding:2px 4.500px;flex:none;line-height:15px}`, `
  <div class="tabs"><ue-tab on icon="info" style="width:86px;margin-left:0;border-top:1px solid #3a79bb;padding:0 0 0 2px">Inspector</ue-tab>${icon('lock', 9, px(206))}${icon('dots', 9, px(6))}</div>
  <div class="wrap"><div class="body">
    <div class="head"><div class="obj">${icon('cube', 22)}${icon('down', 8)}</div>
      <div><div class="line" style="margin-top:7px"><ue-check on style="margin-left:9px"></ue-check><ue-field style="width:190px;margin-left:6px;font-weight:600;padding-top:0">Terrain</ue-field><ue-check on style="margin-left:3px"></ue-check><span style="margin-left:3px;color:#9c9c9c">Static</span>${icon('down', 8, px(2))}</div>
      <div class="line"><span style="margin-left:6px;width:24px">Tag</span><ue-select style="width:105px">Untagged</ue-select><span style="margin-left:12px;width:33px">Layer</span><ue-select style="width:95px">Default</ue-select></div></div></div>
    <ue-component icon="gizmo">Transform</ue-component><div style="height:1.500px;flex:none"></div>
    ${vec('Position', 0)}${vec('Rotation', 0)}${vec('Scale', 1)}<div style="height:6.500px;flex:none"></div>
    <ue-component icon="terrain" check>Terrain</ue-component>
    <div class="tools">${['raise','brush','tree','flower'].map(n => `<ue-button lit>${icon(n, 15)}</ue-button>`).join('')}<ue-button dim style="background:#303030;color:#a8a8a8">${icon('gear', 13)}</ue-button></div>
    <div class="box">Terrain Settings</div>
    <ue-foldout>Basic Terrain</ue-foldout>
    <ue-prop label="Grouping ID"><ue-field style="width:180px">0</ue-field></ue-prop>
    ${chk('Auto Connect', 1, '<ue-button lit style="width:113px;height:16px;margin-left:54px;border-radius:3px;background:#585858;color:#e0e0e0">Reconnect</ue-button>')}<div style="height:1.500px;flex:none"></div>
    ${chk('Draw', 1)}${chk('Draw Instanced', 0)}${sld('Pixel Error', 2, 5)}${sld('Base Map Dist.', 27, 1000)}
    <ue-prop label="Cast Shadows"><ue-select style="width:179px">Two Sided</ue-select></ue-prop><ue-prop label="Reflection Probes"><ue-select style="width:179px">Blend Probes</ue-select></ue-prop>
    <ue-prop label="Material" style="height:22px"><ue-field style="width:122px"><div style="display:flex;align-items:center;gap:2px;line-height:13px">${icon('ball', 10)}<div style="width:93px;flex:none;letter-spacing:.12px">Default-Terrain-S</div>${icon('target', 10)}</div></ue-field><ue-button lit style="width:54px;height:15px;margin:-3px 0 0 3px;border-radius:3px;background:#585858;color:#e0e0e0">Create...</ue-button></ue-prop>
    <ue-foldout>Tree &amp; Detail Objects</ue-foldout>
    ${chk('Draw', 1)}${chk('Bake Light Probes', 1)}${chk('Remove Light Probe Ringing', 1)}${chk('Preserve Tree Prototype Layers', 0)}
    ${sld('Detail Distance', 38, 80)}${sld('Detail Density', 122, 1)}${sld('Tree Distance', 122, 5000)}${sld('Billboard Start', 2, 50)}${sld('Fade Length', 3, 5)}${sld('Max Mesh Trees', 0, 50)}
    <div style="height:6px;flex:none"></div><ue-foldout>Wind Settings for Grass (On Terrain Data)</ue-foldout>${sld('Speed', 61, 0.5)}${sld('Size', 61, 0.5)}
  </div><div class="scroll">${icon('down', 8, 'transform:rotate(180deg);margin-top:3px')}<div class="thumb"></div>${icon('down', 8, 'margin-bottom:4px')}</div></div>
  <div class="tip">Terrain Settings</div>`);

define('ue-status', ':host{display:flex;justify-content:flex-end;height:18.500px;background:#191919;color:#c8c8c8}ue-button{width:23.500px;height:18px;background:none;border-left:1px solid #222;padding-right:2px}', ['bug','layers','refresh','done'].map(n => `<ue-button>${icon(n, 13)}</ue-button>`).join(''));
define('ue-taskbar', ':host{display:flex;height:8px;background:linear-gradient(90deg,#1c3440,#20404c 45%,#1d3044 75%,#172444);overflow:hidden;font:9.500px/12px "Open Sans",sans-serif;color:#e6e6e6}i{display:block;width:43px;height:8px;background:#4f626a;margin-left:757px}span{margin-top:3px;flex:none}', '<i></i><span style="margin-left:439px;width:47px">ENG</span><span>22:55</span>');

define('ue-editor', ':host{display:flex;flex-direction:column;width:1379px;height:727px;background:#111;overflow:hidden}main{display:flex;height:654px;gap:2px;flex:none}.top{display:flex;gap:3px}ue-hierarchy,ue-scene{flex:none}', `
  <ue-menubar></ue-menubar><ue-toolbar></ue-toolbar>
  <main><div><div class="top"><ue-hierarchy></ue-hierarchy><ue-scene></ue-scene></div><ue-project></ue-project></div><ue-inspector></ue-inspector></main>
  <ue-status></ue-status><ue-taskbar></ue-taskbar>`);
</script>
</body>
</html>
